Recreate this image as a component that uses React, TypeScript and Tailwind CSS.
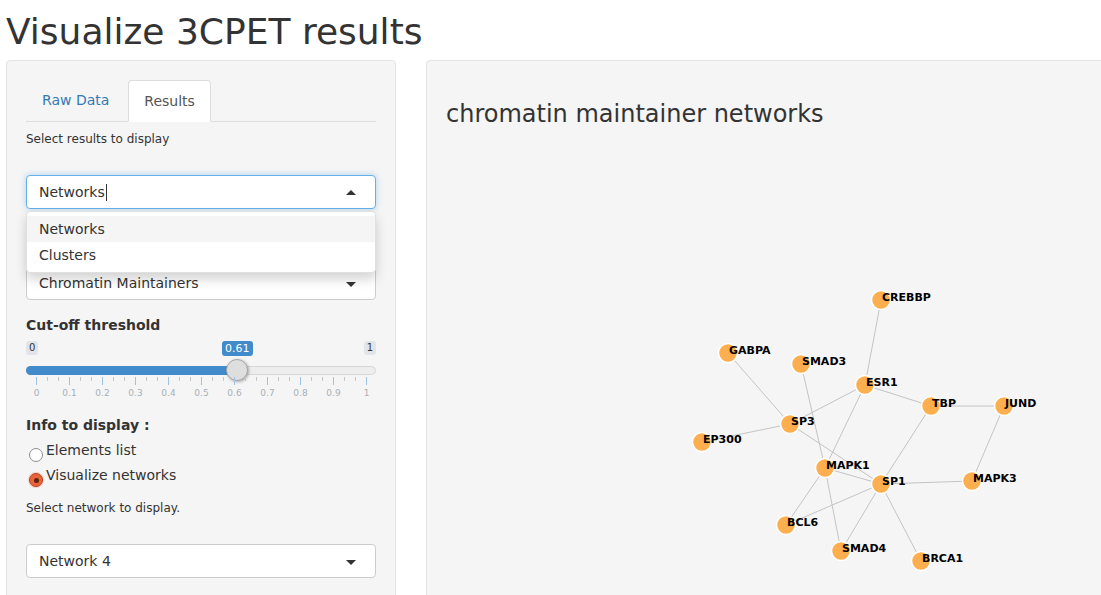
import React from 'react';

const FONT = { fontFamily: '"DejaVu Sans", "Liberation Sans", sans-serif' };

type Node = { id: string; x: number; y: number };

const NODES: Node[] = [
  { id: 'CREBBP', x: 881, y: 300 },
  { id: 'GABPA', x: 728, y: 353 },
  { id: 'SMAD3', x: 801, y: 364 },
  { id: 'ESR1', x: 865, y: 385 },
  { id: 'TBP', x: 931, y: 406 },
  { id: 'JUND', x: 1004, y: 406 },
  { id: 'SP3', x: 790, y: 424 },
  { id: 'EP300', x: 702, y: 442 },
  { id: 'MAPK1', x: 825, y: 468 },
  { id: 'SP1', x: 881, y: 484 },
  { id: 'MAPK3', x: 972, y: 481 },
  { id: 'BCL6', x: 786, y: 525 },
  { id: 'SMAD4', x: 841, y: 551 },
  { id: 'BRCA1', x: 921, y: 561 },
];

const EDGES: [string, string][] = [
  ['CREBBP', 'ESR1'],
  ['GABPA', 'SP3'],
  ['SMAD3', 'MAPK1'],
  ['MAPK1', 'SMAD4'],
  ['ESR1', 'SP3'],
  ['ESR1', 'TBP'],
  ['ESR1', 'MAPK1'],
  ['TBP', 'JUND'],
  ['TBP', 'SP1'],
  ['JUND', 'MAPK3'],
  ['SP3', 'EP300'],
  ['SP3', 'SP1'],
  ['MAPK1', 'SP1'],
  ['MAPK1', 'BCL6'],
  ['SP1', 'MAPK3'],
  ['SP1', 'BCL6'],
  ['SP1', 'SMAD4'],
  ['SP1', 'BRCA1'],
];

const byId = Object.fromEntries(NODES.map((n) => [n.id, n]));

function Caret({ up }: { up?: boolean }) {
  return (
    <span
      className={
        up
          ? 'absolute right-[19px] top-[14px] h-0 w-0 border-x-[5px] border-b-[5px] border-x-transparent border-b-[#333]'
          : 'absolute right-[19px] top-[15px] h-0 w-0 border-x-[5px] border-t-[5px] border-x-transparent border-t-[#333]'
      }
    />
  );
}

function SelectBox({ value, focused, children }: { value: string; focused?: boolean; children?: React.ReactNode }) {
  return (
    <div className="relative">
      <div
        className={
          focused
            ? 'relative flex h-[34px] items-center rounded-[4px] border border-[#66afe9] bg-white pl-[12px] text-[14px] text-[#333] shadow-[0_0_6px_rgba(102,175,233,0.5)]'
            : 'relative flex h-[34px] items-center rounded-[4px] border border-[#ccc] bg-white pl-[12px] text-[14px] text-[#333]'
        }
      >
        <span>{value}</span>
        {focused && <span className="ml-[1px] h-[17px] w-[1px] bg-[#333]" />}
        <Caret up={focused} />
      </div>
      {children}
    </div>
  );
}

function Slider() {
  const majors = Array.from({ length: 11 }, (_, i) => i);
  const minors = Array.from({ length: 31 }, (_, i) => i).filter((i) => i % 3 !== 0);
  const labels = ['0', '0.1', '0.2', '0.3', '0.4', '0.5', '0.6', '0.7', '0.8', '0.9', '1'];
  const pos = (v: number) => 10 + v * 330;
  return (
    <div className="relative h-[62px]">
      <span className="absolute left-0 top-[6px] rounded-[3px] bg-[#e1e4e9] px-[3px] text-[10px] leading-[14px] text-[#333]">0</span>
      <span className="absolute right-0 top-[6px] rounded-[3px] bg-[#e1e4e9] px-[3px] text-[10px] leading-[14px] text-[#333]">1</span>
      <span className="absolute left-[196px] top-[6px] rounded-[3px] bg-[#428bca] px-[3px] text-[11px] leading-[15px] text-white">0.61</span>
      <div className="absolute left-0 right-0 top-[31px] h-[9px] rounded-full border border-[#d6d6d6] bg-[#ededed]" />
      <div className="absolute left-0 top-[31px] h-[9px] w-[214px] rounded-l-full bg-[#428bca]" />
      <div className="absolute left-[200px] top-[24px] h-[22px] w-[22px] rounded-full border border-[#a8a8a8] bg-[#dedede] shadow-[1px_1px_3px_rgba(0,0,0,0.3)]" />
      {majors.map((i) => (
        <span key={'M' + i} className="absolute top-[42px] h-[8px] w-[1px] bg-[#9fc2e3]" style={{ left: pos(i / 10) }} />
      ))}
      {minors.map((i) => (
        <span key={'m' + i} className="absolute top-[42px] h-[4px] w-[1px] bg-[#c2c7cc]" style={{ left: pos(i / 30) }} />
      ))}
      {labels.map((l, i) => (
        <span
          key={l}
          className="absolute top-[52px] w-[30px] -translate-x-1/2 text-center text-[9px] leading-[12px] text-[#a9b0b8]"
          style={{ left: pos(i / 10) + 0.5 }}
        >
          {l}
        </span>
      ))}
    </div>
  );
}

function Radio({ checked, label }: { checked?: boolean; label: string }) {
  return (
    <div className="flex h-[20px] items-start">
      {checked ? (
        <span className="ml-[3px] mt-[8px] flex h-[14px] w-[14px] items-center justify-center rounded-full border border-[#b8461f] bg-[#ea6339] shadow-[0_0_0_1px_rgba(233,99,57,0.25)]">
          <span className="h-[5px] w-[5px] rounded-full bg-[#5c2412]" />
        </span>
      ) : (
        <span className="ml-[3px] mt-[8px] h-[14px] w-[14px] rounded-full border border-[#8f8f8f] bg-white" />
      )}
      <span className="ml-[3px] text-[14px] leading-[20px] text-[#333]">{label}</span>
    </div>
  );
}

function LeftPanel() {
  return (
    <div className="h-[560px] w-[390px] shrink-0 rounded-[4px] border border-[#e3e3e3] bg-[#f5f5f5] p-[19px]">
      <div className="flex border-b border-[#ddd]">
        <span className="mr-[3px] px-[16px] py-[10px] text-[14px] leading-[20px] text-[#337ab7]">Raw Data</span>
        <span className="-mb-[1px] rounded-t-[4px] border border-[#ddd] border-b-transparent bg-white px-[15px] py-[10px] text-[14px] leading-[20px] text-[#555]">
          Results
        </span>
      </div>
      <p className="mt-[9px] text-[12px] leading-[17px] text-[#333]">Select results to display</p>
      <div className="mt-[27px]">
        <SelectBox value="Networks" focused>
          <div className="absolute left-0 right-0 top-[36px] z-10 rounded-[4px] border border-[#e0e0e0] bg-white py-[4px] text-[14px] text-[#333] shadow-[0_6px_12px_rgba(0,0,0,0.175)]">
            <div className="flex h-[26px] items-center bg-[#f5f5f5] pl-[12px]">Networks</div>
            <div className="flex h-[26px] items-center pl-[12px]">Clusters</div>
          </div>
        </SelectBox>
      </div>
      <div className="mt-[57px]">
        <SelectBox value="Chromatin Maintainers" />
      </div>
      <p className="mt-[15px] text-[14px] font-bold leading-[20px] text-[#333]">Cut-off threshold</p>
      <Slider />
      <p className="mt-[18px] text-[14px] font-bold leading-[20px] text-[#333]">Info to display :</p>
      <div className="mt-[5px] flex flex-col gap-[5px]">
        <Radio label="Elements list" />
        <Radio checked label="Visualize networks" />
      </div>
      <p className="mt-[15px] text-[12px] leading-[17px] text-[#333]">Select network to display.</p>
      <div className="mt-[27px]">
        <SelectBox value="Network 4" />
      </div>
    </div>
  );
}

function NetworkGraph() {
  return (
    <svg width={660} height={460} viewBox="446 137 660 460" className="block">
      {EDGES.map(([a, b]) => (
        <line
          key={a + b}
          x1={byId[a].x}
          y1={byId[a].y}
          x2={byId[b].x}
          y2={byId[b].y}
          stroke="#c4c4c4"
          strokeWidth={1}
        />
      ))}
      {NODES.map((n) => (
        <circle key={n.id} cx={n.x} cy={n.y} r={9.5} fill="#fdae4e" stroke="#fff" strokeWidth={1.5} />
      ))}
      {NODES.map((n) => (
        <text
          key={'t' + n.id}
          x={n.x + 1}
          y={n.y + 1}
          fontSize={11}
          fontWeight="bold"
          fill="#000"
          style={FONT}
        >
          {n.id}
        </text>
      ))}
    </svg>
  );
}

function RightPanel() {
  return (
    <div className="h-[560px] w-[700px] shrink-0 rounded-[4px] border border-[#e3e3e3] bg-[#f5f5f5] p-[19px]">
      <h3 className="mb-[10px] mt-[21px] text-[24px] leading-[26px] text-[#333]">chromatin maintainer networks</h3>
      <NetworkGraph />
    </div>
  );
}

export default function App() {
  return (
    <div className="h-[595px] w-[1101px] overflow-hidden bg-white text-[#333]" style={FONT}>
      <div className="px-[6px] pt-[12px]">
        <h1 className="mb-[8px] text-[36px] leading-[40px] text-[#333]">Visualize 3CPET results</h1>
        <div className="flex gap-[30px]">
          <LeftPanel />
          <RightPanel />
        </div>
      </div>
    </div>
  );
}
